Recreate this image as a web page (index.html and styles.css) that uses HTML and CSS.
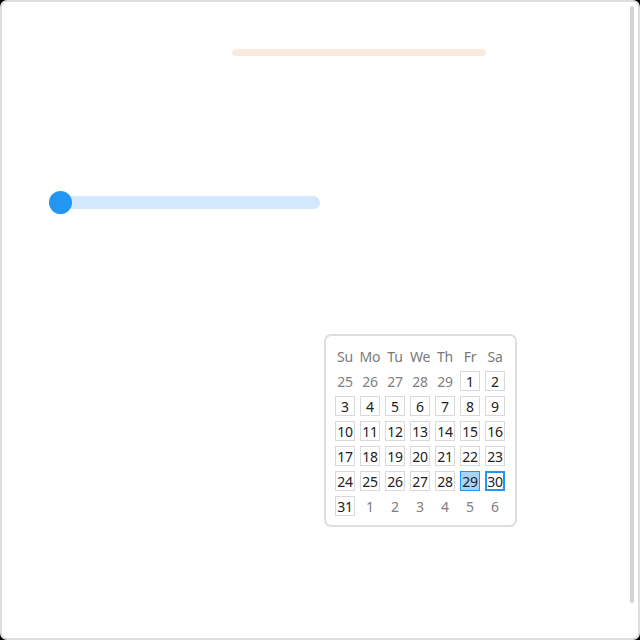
FILE: index.html
```html
<!DOCTYPE html>
<html lang="en">
<head>
<meta charset="utf-8">
<title>Widgets</title>
<link rel="stylesheet" href="styles.css">
</head>
<body>
<div class="frame">
  <div class="progress"></div>
  <div class="slider">
    <div class="track"></div>
    <div class="thumb"></div>
  </div>
  <div class="calendar">
    <div class="dow">Su</div><div class="dow">Mo</div><div class="dow">Tu</div><div class="dow">We</div><div class="dow">Th</div><div class="dow">Fr</div><div class="dow">Sa</div>
    <div class="day other">25</div><div class="day other">26</div><div class="day other">27</div><div class="day other">28</div><div class="day other">29</div><div class="day">1</div><div class="day">2</div>
    <div class="day">3</div><div class="day">4</div><div class="day">5</div><div class="day">6</div><div class="day">7</div><div class="day">8</div><div class="day">9</div>
    <div class="day">10</div><div class="day">11</div><div class="day">12</div><div class="day">13</div><div class="day">14</div><div class="day">15</div><div class="day">16</div>
    <div class="day">17</div><div class="day">18</div><div class="day">19</div><div class="day">20</div><div class="day">21</div><div class="day">22</div><div class="day">23</div>
    <div class="day">24</div><div class="day">25</div><div class="day">26</div><div class="day">27</div><div class="day">28</div><div class="day selected">29</div><div class="day today">30</div>
    <div class="day">31</div><div class="day other">1</div><div class="day other">2</div><div class="day other">3</div><div class="day other">4</div><div class="day other">5</div><div class="day other">6</div>
  </div>
  <div class="scrollbar"></div>
</div>
</body>
</html>
```
FILE: styles.css
```css
html, body {
  margin: 0;
  padding: 0;
  background: #000;
}
.frame {
  position: relative;
  width: 640px;
  height: 640px;
  box-sizing: border-box;
  border: 2px solid #dedede;
  border-radius: 7px;
  background: #fff;
  overflow: hidden;
  font-family: "Noto Sans", "Open Sans", sans-serif;
}
.progress {
  margin: 47px 0 0 230px;
  width: 254px;
  height: 7px;
  border-radius: 4px;
  background: #f8eadf;
}
.slider {
  position: relative;
  margin: 135px 0 0 47px;
  width: 271px;
  height: 23px;
}
.track {
  position: absolute;
  left: 0;
  right: 0;
  top: 5px;
  height: 13px;
  border-radius: 7px;
  background: #d2e8fc;
}
.thumb {
  position: absolute;
  left: 0;
  top: 0;
  width: 23px;
  height: 23px;
  border-radius: 50%;
  background: #2196f3;
}
.calendar {
  margin: 120px 0 0 322px;
  width: fit-content;
  display: grid;
  grid-template-columns: repeat(7, 20px);
  grid-auto-rows: 20px;
  gap: 5px;
  padding: 10px 10px 9px 9px;
  border: 2px solid #dedede;
  border-radius: 7px;
  font-size: 14px;
}
.dow, .day {
  display: flex;
  align-items: center;
  justify-content: center;
  box-sizing: border-box;
  letter-spacing: -0.2px;
  white-space: nowrap;
}
.dow {
  color: #7a7a7a;
}
.day {
  color: #222;
  border: 1px solid #d9d9d9;
  background: #fff;
}
.day.other {
  color: #808080;
  border-color: transparent;
}
.day.selected {
  background: #a7d3f7;
  border-color: #2196f3;
}
.day.today {
  border: 2px solid #2196f3;
}
.scrollbar {
  position: absolute;
  top: 4px;
  right: 4px;
  width: 4px;
  height: 597px;
  border-radius: 2px;
  background: #d4d4d4;
}
```
